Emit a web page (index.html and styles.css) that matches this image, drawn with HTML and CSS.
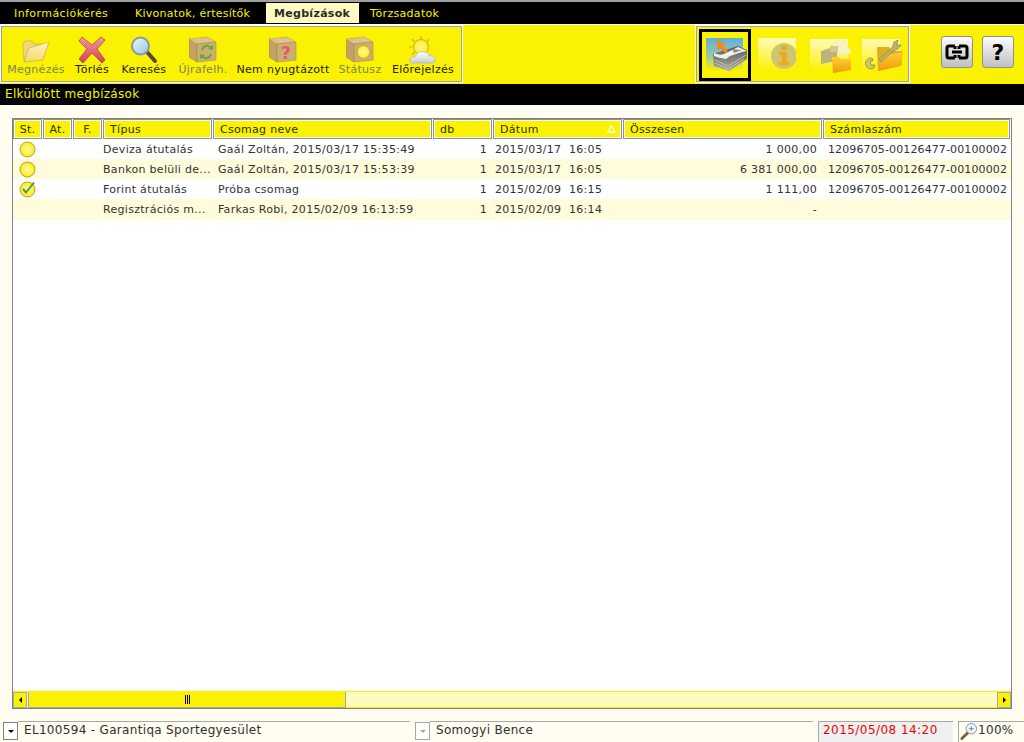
FILE: index.html
```html
<!DOCTYPE html>
<html lang="hu">
<head>
<meta charset="utf-8">
<title>Elküldött megbízások</title>
<link rel="stylesheet" href="styles.css">
</head>
<body>
<svg class="defs" width="0" height="0" aria-hidden="true">
  <defs>
    <linearGradient id="gFolder" x1="0" y1="0" x2="0" y2="1"><stop offset="0" stop-color="#fff5c0"/><stop offset="1" stop-color="#f4d868"/></linearGradient>
    <linearGradient id="gX" x1="0" y1="0" x2="0" y2="1"><stop offset="0" stop-color="#ee9aa0"/><stop offset="1" stop-color="#d4405c"/></linearGradient>
    <linearGradient id="gLens" x1="0" y1="0" x2="1" y2="1"><stop offset="0" stop-color="#eef8fb"/><stop offset="1" stop-color="#90c8dc"/></linearGradient>
    <radialGradient id="gDot" cx=".5" cy=".5" r=".55"><stop offset="0" stop-color="#fffaa8"/><stop offset=".7" stop-color="#fff030"/><stop offset="1" stop-color="#f4d800"/></radialGradient>
    <linearGradient id="gOrange" x1="0" y1="0" x2="0" y2="1"><stop offset="0" stop-color="#ffd030"/><stop offset="1" stop-color="#f09a10"/></linearGradient>
    <linearGradient id="gFade" x1="0" y1="0" x2="0" y2="1"><stop offset="0" stop-color="#fffbb8"/><stop offset="1" stop-color="#faf200"/></linearGradient>
    <linearGradient id="gSky" x1="0" y1="0" x2="0" y2="1"><stop offset="0" stop-color="#62aedc"/><stop offset=".55" stop-color="#9cc8a8"/><stop offset="1" stop-color="#faf200"/></linearGradient>
    <linearGradient id="gCloud" x1="0" y1="0" x2="0" y2="1"><stop offset="0" stop-color="#ffffff"/><stop offset="1" stop-color="#c8ccd4"/></linearGradient>
    <linearGradient id="gStack" x1="0" y1="0" x2="0" y2="1"><stop offset="0" stop-color="#5c5c58"/><stop offset="1" stop-color="#a8a8a0"/></linearGradient>
    <g id="box">
      <path d="M0 3 L8 8 L8 26 L0 21 Z" fill="#c4a264" stroke="#a88a50" stroke-width=".6"/>
      <path d="M0 3 L18 1 L27 6 L8 8 Z" fill="#dcc48c" stroke="#b09858" stroke-width=".5"/>
      <path d="M8 8 L27 6 L27 24 L8 26 Z" fill="#ccae70" stroke="#a88a50" stroke-width=".6"/>
    </g>
  </defs>
</svg>
<div class="page">
  <nav class="menu">
    <a class="tab tab-1">Információkérés</a>
    <a class="tab tab-2">Kivonatok, értesítők</a>
    <a class="tab tab-3 active">Megbízások</a>
    <a class="tab tab-4">Törzsadatok</a>
  </nav>

  <section class="toolbar">
    <div class="tgroup tgroup-left">
      <div class="tool tool-1 off">
        <svg width="28" height="28" viewBox="0 0 28 28"><path d="M2 26 L1 8 L3 5 L10 5 L12 8 L21 8 L22 12 L8 12 Z" fill="#f0d878" stroke="#c8ac50" stroke-width=".7"/><path d="M2 26 L7 12 L27 6 L21 24 Z" fill="url(#gFolder)" stroke="#c8ac50" stroke-width=".7"/></svg>
        <span>Megnézés</span>
      </div>
      <div class="tool tool-2">
        <svg width="28" height="28" viewBox="0 0 28 28"><path d="M4 1 L14 9 L23 1 L27 4 L19 13 L27 24 L24 27 L14 17 L5 27 L1 23 L9 13 L1 5 Z" fill="url(#gX)" stroke="#a83848" stroke-width=".7"/></svg>
        <span>Törlés</span>
      </div>
      <div class="tool tool-3">
        <svg width="28" height="28" viewBox="0 0 28 28"><path d="M17 16 L25 25" stroke="#5a4a38" stroke-width="4" stroke-linecap="round"/><circle cx="10.500" cy="10" r="8.500" fill="url(#gLens)" stroke="#8e979c" stroke-width="2"/></svg>
        <span>Keresés</span>
      </div>
      <div class="tool tool-4 off">
        <svg width="28" height="28" viewBox="0 0 28 28"><use href="#box"/><path d="M13 14 a5 5 0 0 1 9 -2 M22 18 a5 5 0 0 1 -9 2" fill="none" stroke="#60a848" stroke-width="2"/><path d="M24 9 L24 14 L19 13 Z M11 23 L11 18 L16 19 Z" fill="#60a848"/></svg>
        <span>Újrafelh.</span>
      </div>
      <div class="tool tool-5">
        <svg width="28" height="28" viewBox="0 0 28 28"><use href="#box"/><text class="qmark" x="12" y="23">?</text></svg>
        <span>Nem nyugtázott</span>
      </div>
      <div class="tool tool-6 off">
        <svg width="28" height="28" viewBox="0 0 28 28"><use href="#box"/><circle cx="17.500" cy="16" r="6.500" fill="url(#gDot)" stroke="#b89c48" stroke-width=".8"/></svg>
        <span>Státusz</span>
      </div>
      <div class="tool tool-7">
        <svg width="28" height="28" viewBox="0 0 28 28"><g stroke="#c8b030" stroke-width="1.200" fill="none"><path d="M12 0 L12 4 M3 3 L6 6 M20 3 L18 6 M0 11 L3 11 M3 19 L6 16"/></g><circle cx="12" cy="11" r="7.500" fill="url(#gDot)" stroke="#c8b030"/><path d="M3 27 Q0 27 1 23 Q2 20 6 21 Q8 15 14 16 Q20 16 20 20 Q26 19 26 24 Q26 27 23 27 Z" fill="url(#gCloud)" stroke="#a8acb4" stroke-width=".6"/></svg>
        <span>Előrejelzés</span>
      </div>
    </div>

    <div class="tgroup tgroup-right">
      <div class="module selected">
        <svg width="42" height="34" viewBox="0 0 42 34"><rect width="37" height="33" fill="url(#gSky)"/><path d="M7 16 L8 28 L23 33 L41 21 L41 12 L32 8 Z" fill="url(#gStack)"/><path d="M8 15 Q14 18 18 16 L32 9 L41 13 L36 14 L24 18 L20 21 Q13 20 8 18 Z" fill="#f0f0ec"/><path d="M26 11 L36 12 L28 15 Z" fill="#8c8c84"/><path d="M9 22 L22 28 L40 17 M9 25 L22 31 L38 21" fill="none" stroke="#d8d8d0" stroke-width=".7"/><path d="M10 2 L20 6 L17 8 L22 13 L19 15 L14 10 L12 13 Z" fill="#f08a18"/></svg>
      </div>
      <div class="module">
        <svg width="38" height="34" viewBox="0 0 38 34"><rect width="38" height="33" fill="url(#gFade)"/><circle cx="26" cy="18" r="13" fill="#cdc66e"/><rect x="23.500" y="8" width="5" height="4" fill="#f0a818"/><path d="M21 14 L28.500 14 L28.500 24 L31 24 L31 27 L21 27 L21 24 L24 24 L24 17 L21 17 Z" fill="#f0a818"/></svg>
      </div>
      <div class="module module-wide">
        <svg width="42" height="36" viewBox="0 0 42 36"><rect y="2" width="38" height="32" fill="url(#gFade)"/><path d="M21 8 L32 1 L42 16 L30 18 Z" fill="#f8f4c0" stroke="#e8e4a0" stroke-width=".5"/><path d="M11 14 L27 9 L27 24 L11 27 Z" fill="#b8b47c"/><rect x="20" y="9" width="8" height="6" fill="#d8c890"/><path d="M22 20 L29 20 L31 22 L41 22 L41 33 L23 36 Z" fill="url(#gOrange)"/></svg>
      </div>
      <div class="module module-wide">
        <svg width="42" height="36" viewBox="0 0 42 36"><rect y="2" width="38" height="32" fill="url(#gFade)"/><path d="M15 12 L16 34 L40 28 L40 14 L30 14 L27 10 L15 10 Z" fill="#e4ac20"/><path d="M16 34 L19 19 L41 15 L39 29 Z" fill="url(#gOrange)"/><path d="M10 21 a5.500 5.500 0 1 0 2 10 L13 28 L9 28 L8 24 L11 24 Z" fill="#d0c860" stroke="#808040" stroke-width=".7"/><path d="M17 22 L30 11 L32 5 L36 3 L35 8 L39 8 L36 12 L31 14 L19 25 Z" fill="#b8b46c" stroke="#807c40" stroke-width=".6"/></svg>
      </div>
    </div>

    <div class="actions">
      <button class="action" type="button" aria-label="Hivatkozás">
        <svg width="24" height="16" viewBox="0 0 24 16"><path d="M10 2 L4 2 Q2 2 2 4 L2 12 Q2 14 4 14 L10 14 M14 2 L20 2 Q22 2 22 4 L22 12 Q22 14 20 14 L14 14 M7 8 L17 8 M10 2 L10 5 M14 2 L14 5 M10 14 L10 11 M14 14 L14 11" fill="none" stroke="#000" stroke-width="3"/></svg>
      </button>
      <button class="action help" type="button">?</button>
    </div>
  </section>

  <h1 class="title">Elküldött megbízások</h1>

  <main class="content">
    <div class="grid">
      <div class="row head">
        <div class="th c">St.</div><div class="th c">At.</div><div class="th c">F.</div>
        <div class="th">Típus</div><div class="th">Csomag neve</div><div class="th">db</div>
        <div class="th sort">Dátum<svg class="arrow" width="9" height="8" viewBox="0 0 9 8"><path d="M4.500 1 L8 7 L1 7 Z" fill="none" stroke="#fffff0" stroke-width="1.300"/></svg></div><div class="th">Összesen</div><div class="th">Számlaszám</div>
      </div>
      <div class="rows">
        <div class="row">
          <div class="td st"><svg class="dot" width="17" height="17" viewBox="0 0 17 17"><circle cx="8.500" cy="8.500" r="7.500" fill="url(#gDot)" stroke="#b8a030"/></svg></div><div class="td"></div><div class="td"></div>
          <div class="td tp">Deviza átutalás</div><div class="td">Gaál Zoltán, 2015/03/17 15:35:49</div><div class="td r">1</div>
          <div class="td date">2015/03/17&nbsp; 16:05</div><div class="td r">1 000,00</div><div class="td acc">12096705-00126477-00100002</div>
        </div>
        <div class="row alt">
          <div class="td st"><svg class="dot" width="17" height="17" viewBox="0 0 17 17"><circle cx="8.500" cy="8.500" r="7.500" fill="url(#gDot)" stroke="#b8a030"/></svg></div><div class="td"></div><div class="td"></div>
          <div class="td tp">Bankon belüli de...</div><div class="td">Gaál Zoltán, 2015/03/17 15:53:39</div><div class="td r">1</div>
          <div class="td date">2015/03/17&nbsp; 16:05</div><div class="td r">6 381 000,00</div><div class="td acc">12096705-00126477-00100002</div>
        </div>
        <div class="row">
          <div class="td st"><svg class="dot" width="17" height="17" viewBox="0 0 17 17"><circle cx="8.500" cy="8.500" r="7.500" fill="url(#gDot)" stroke="#b8a030"/><path d="M4 8 L7 11.500 L15 1.500" fill="none" stroke="#4a9a40" stroke-width="2"/></svg></div><div class="td"></div><div class="td"></div>
          <div class="td tp">Forint átutalás</div><div class="td">Próba csomag</div><div class="td r">1</div>
          <div class="td date">2015/02/09&nbsp; 16:15</div><div class="td r">1 111,00</div><div class="td acc">12096705-00126477-00100002</div>
        </div>
        <div class="row alt row-last">
          <div class="td st"></div><div class="td"></div><div class="td"></div>
          <div class="td tp">Regisztrációs m...</div><div class="td">Farkas Robi, 2015/02/09 16:13:59</div><div class="td r">1</div>
          <div class="td date">2015/02/09&nbsp; 16:14</div><div class="td r">-</div><div class="td acc"></div>
        </div>
      </div>
      <div class="hscroll">
        <div class="sbtn"><i class="tri-l"></i></div>
        <div class="thumb"><i class="grip"></i></div>
        <div class="track"></div>
        <div class="sbtn"><i class="tri-r"></i></div>
      </div>
    </div>
  </main>

  <footer class="status">
    <div class="combo"><span class="drop"><i class="tri-d"></i></span><span class="field">EL100594 - Garantiqa Sportegyesület</span></div>
    <div class="combo combo-2"><span class="drop drop-off"><i class="tri-d"></i></span><span class="field">Somogyi Bence</span></div>
    <div class="clock">2015/05/08 14:20</div>
    <div class="zoomer">
      <svg width="18" height="19" viewBox="0 0 19 19"><path d="M8 11 L2 17" stroke="#8a5a30" stroke-width="3" stroke-linecap="round"/><circle cx="12" cy="6.500" r="5.500" fill="#eef4f8" stroke="#8090a0"/><path d="M9.500 6.500 L14.500 6.500 M12 4 L12 9" stroke="#7088a0"/></svg>
      <span>100%</span>
    </div>
  </footer>
</div>
</body>
</html>
```
FILE: styles.css
```css
* { box-sizing: border-box; }
html, body { margin: 0; height: 100%; }
body { font: 11px/13px "DejaVu Sans", Verdana, sans-serif; letter-spacing: .3px; color: #333; background: #fffdf0; overflow: hidden; }
.defs { position: absolute; }
.page { height: 742px; display: flex; flex-direction: column; }

.menu { height: 25px; background: #000; border-top: 2px solid #a0a0a0; border-bottom: 1px solid #fff; display: flex; align-items: stretch; padding: 1px 0 0; }
.tab { color: #faf200; height: 20px; line-height: 21px; white-space: nowrap; }
.tab-1 { margin-left: 14px; width: 121px; letter-spacing: .42px; }
.tab-2 { width: 131px; letter-spacing: .25px; }
.tab-3 { width: 93px; padding-left: 8px; margin-right: 11px; }
.tab.active { background: #fffbc0; color: #2b2b2b; font-weight: 700; }

.toolbar { height: 59px; background: #faf200; display: flex; align-items: stretch; }
.tgroup { border: 1px solid #a0a0b0; box-shadow: 0 0 0 1px #fff; margin: 1px 0 2px; display: flex; }
.tgroup-left { width: 461px; margin-left: 1px; padding-left: 4px; }
.tool { display: flex; flex-direction: column; align-items: center; padding-top: 9px; }
.tool span { white-space: nowrap; line-height: 13px; color: #202000; margin-top: -1px; }
.tool svg { display: block; }
.tool.off span { color: #80805a; }
.tool-1 { width: 60px; }
.tool-2 { width: 52px; }
.tool-3 { width: 52px; }
.tool-4 { width: 66px; }
.tool-5 { width: 94px; }
.tool-6 { width: 60px; }
.tool-7 { width: 66px; }
.qmark { font: 700 17px "DejaVu Sans", sans-serif; fill: #e85868; }

.tgroup-right { width: 213px; margin-left: 234px; padding: 2px 0 0 2px; }
.module { width: 52px; height: 52px; display: flex; align-items: center; justify-content: center; flex: none; }
.module.selected { border: 3px solid #000; justify-content: flex-start; padding-left: 4px; }
.module-wide { justify-content: flex-start; padding-left: 7px; }
.actions { display: flex; gap: 9px; margin-left: 32px; align-items: center; padding-bottom: 5px; }
.action { width: 32px; height: 32px; padding: 0; border: 1px solid #909090; border-radius: 3px; background: linear-gradient(#fcfcfc, #c0c0c0); display: flex; align-items: center; justify-content: center; flex: none; }
.help { font: 700 22px "DejaVu Sans", sans-serif; color: #000; }

.title { margin: 0; height: 21px; background: #000; color: #faf200; font: 400 12px/21px "DejaVu Sans", sans-serif; letter-spacing: .3px; padding-left: 5px; }

.content { height: 615px; padding: 13px 12px 0; flex: none; }
.grid { height: 591px; border: 1px solid #808080; background: #fff; display: flex; flex-direction: column; }
.row { display: grid; grid-template-columns: 30px 30px 30px 110px 220px 60px 130px 200px 188px; height: 20px; align-items: stretch; }
.row.alt { background: #fffcdc; }
.row-last { height: 21px; }
.rows { flex: 1; }
.th { height: 20px; background: #faf200; border: 1px solid #909090; outline: 1px solid #fff; outline-offset: -2px; margin-right: 1px; padding-left: 6px; line-height: 20px; color: #303000; position: relative; white-space: nowrap; }
.th.c { padding-left: 0; text-align: center; }
.arrow { position: absolute; right: 5px; top: 5px; }
.td { padding: 0 5px; white-space: nowrap; overflow: hidden; line-height: 21px; }
.td.r { text-align: right; padding-right: 6px; }
.td.tp { padding-left: 0; }
.td.date { padding-left: 2px; }
.td.acc { padding: 0 0 0 5px; letter-spacing: .12px; }
.td.st { padding: 1px 0 0 6px; display: flex; align-items: center; overflow: visible; }

.hscroll { height: 17px; display: flex; background: #fffbc0; border-top: 1px solid #faf200; flex: none; }
.sbtn { width: 14px; height: 16px; background: #faf200; border: 1px solid #a8a8a8; display: flex; align-items: center; justify-content: center; flex: none; }
.thumb { width: 318px; margin-left: 1px; background: #faf200; border: 1px solid #a8a8a8; border-top: 0; display: flex; align-items: center; justify-content: center; }
.track { flex: 1; border-bottom: 1px solid #faf200; }
.grip { width: 5px; height: 9px; border-left: 1px solid #000; border-right: 1px solid #000; background: linear-gradient(#000, #000) center / 1px 100% no-repeat; }
.tri-l { border-top: 3px solid transparent; border-bottom: 3px solid transparent; border-right: 3px solid #000; }
.tri-r { border-top: 3px solid transparent; border-bottom: 3px solid transparent; border-left: 3px solid #000; }
.tri-d { border-left: 3px solid transparent; border-right: 3px solid transparent; border-top: 3px solid #000; }

.status { flex: 1; display: flex; padding: 1px 0 0 3px; font-size: 12px; letter-spacing: .32px; }
.combo { display: flex; width: 407px; margin-right: 5px; }
.combo-2 { width: 398px; margin-right: 5px; }
.drop { width: 15px; height: 18px; margin-top: 1px; border: 1px solid #808080; display: flex; align-items: center; justify-content: center; background: #fff; flex: none; }
.drop-off { border-color: #a8a8a8; }
.drop-off .tri-d { border-top-color: #a8a8a8; }
.field { flex: 1; border-top: 1px solid #a8a8a8; padding: 2px 0 0 6px; color: #303030; }
.clock { width: 135px; background: #f0f0f0; border-top: 1px solid #a8a8a8; border-left: 1px solid #a8a8a8; color: #f00000; padding: 2px 0 0 4px; margin-right: 5px; letter-spacing: .45px; }
.zoomer { flex: 1; display: flex; align-items: flex-start; border-top: 1px solid #a8a8a8; border-left: 1px solid #a8a8a8; padding: 0 0 0 1px; }
.zoomer span { padding-top: 2px; color: #303030; }
```
